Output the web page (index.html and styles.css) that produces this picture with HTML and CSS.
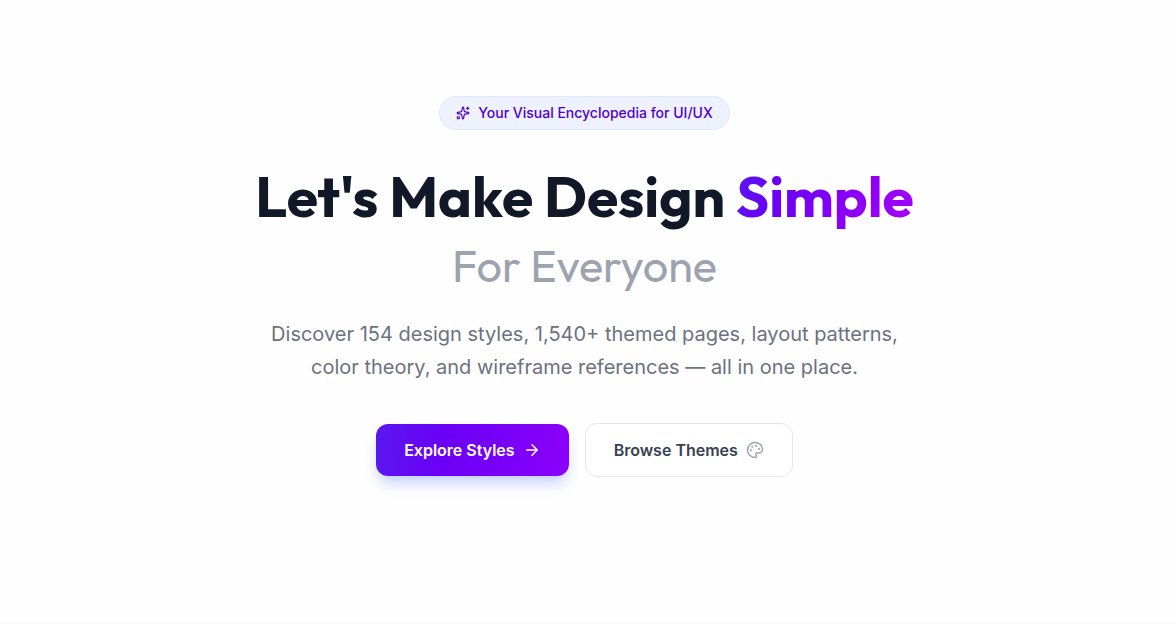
FILE: index.html
```html
<!DOCTYPE html>
<html lang="en">
<head>
<meta charset="utf-8">
<meta name="viewport" content="width=device-width, initial-scale=1">
<title>Let's Make Design Simple</title>
<link rel="stylesheet" href="styles.css">
</head>
<body>
<main class="page">
  <section class="hero">
    <div class="badge">
      <svg class="icon-small" viewBox="0 0 24 24" aria-hidden="true"><path d="M11.017 2.814a1 1 0 0 1 1.966 0l1.051 5.558a2 2 0 0 0 1.594 1.594l5.558 1.051a1 1 0 0 1 0 1.966l-5.558 1.051a2 2 0 0 0-1.594 1.594l-1.051 5.558a1 1 0 0 1-1.966 0l-1.051-5.558a2 2 0 0 0-1.594-1.594l-5.558-1.051a1 1 0 0 1 0-1.966l5.558-1.051a2 2 0 0 0 1.594-1.594z"/><path d="M20 2v4"/><path d="M22 4h-4"/><circle cx="4" cy="20" r="2"/></svg>
      <span>Your Visual Encyclopedia for UI/UX</span>
    </div>
    <h1 class="title">Let's Make Design <span class="accent">Simple</span>
      <span class="subtitle">For Everyone</span>
    </h1>
    <p class="lead">Discover 154 design styles, 1,540+ themed pages, layout patterns, color theory, and wireframe references — all in one place.</p>
    <div class="actions">
      <a class="button primary" href="#styles">Explore Styles
        <svg class="icon" viewBox="0 0 24 24" aria-hidden="true"><path d="M5 12h14"/><path d="m12 5 7 7-7 7"/></svg>
      </a>
      <a class="button secondary" href="#themes">Browse Themes
        <svg class="icon muted" viewBox="0 0 24 24" aria-hidden="true"><path d="M12 22a1 1 0 0 1 0-20 10 9 0 0 1 10 9 5 5 0 0 1-5 5h-2.250a1.750 1.750 0 0 0-1.400 2.800l.3.400a1.750 1.750 0 0 1-1.400 2.800z"/><circle cx="13.500" cy="6.500" r=".5"/><circle cx="17.500" cy="10.500" r=".5"/><circle cx="6.500" cy="12.500" r=".5"/><circle cx="8.500" cy="7.500" r=".5"/></svg>
      </a>
    </div>
  </section>
</main>
</body>
</html>
```
FILE: styles.css
```css
* { box-sizing: border-box; }
body {
  margin: 0;
  background: #fcfcfc;
  color: #111827;
  font-family: Inter, "Liberation Sans", sans-serif;
}
.hero {
  display: flex;
  flex-direction: column;
  align-items: center;
  padding: 96px 30px 144px 24px;
  background: #fefefe;
  text-align: center;
}
.badge {
  display: flex;
  align-items: center;
  gap: 8px;
  padding: 6px 16px;
  border: 1px solid #e0e7ff;
  border-radius: 17px;
  background: #eef2ff;
  color: #5200cc;
  font-size: 14px;
  font-weight: 500;
  line-height: 20px;
}
svg {
  fill: none;
  stroke: currentColor;
  stroke-width: 2;
  stroke-linecap: round;
  stroke-linejoin: round;
}
.icon-small { width: 14px; height: 14px; }
.icon { width: 18px; height: 18px; }
.title {
  margin: 32px 0 24px;
  font-family: Outfit, Lato, sans-serif;
  font-size: 57px;
  font-weight: 700;
  line-height: 68px;
}
.accent {
  background: linear-gradient(110deg, #5a18f0, #6a00f5 25%, #a600fa);
  background-clip: text;
  -webkit-background-clip: text;
  color: transparent;
}
.subtitle {
  display: block;
  margin-top: 8px;
  color: #9ca3af;
  font-size: 45px;
  font-weight: 400;
  line-height: 56px;
}
.lead {
  max-width: 672px;
  margin: 0 0 39px;
  color: #6b7280;
  font-size: 20px;
  line-height: 33px;
}
.actions {
  display: flex;
  flex-wrap: wrap;
  align-items: center;
  justify-content: center;
  gap: 16px;
}
.button {
  display: flex;
  align-items: center;
  gap: 8px;
  padding: 14px 28px;
  border-radius: 12px;
  font-size: 16px;
  font-weight: 600;
  line-height: 24px;
  text-decoration: none;
}
.primary {
  background: linear-gradient(100deg, #5a18f0, #6a00f5 35%, #8b00fa);
  box-shadow: 0 10px 15px -3px #c7d2fe, 0 4px 6px -4px #c7d2fe;
  color: #ffffff;
}
.secondary {
  border: 1px solid #e5e7eb;
  background: #ffffff;
  color: #374151;
}
.muted { color: #9ca3af; }
```
